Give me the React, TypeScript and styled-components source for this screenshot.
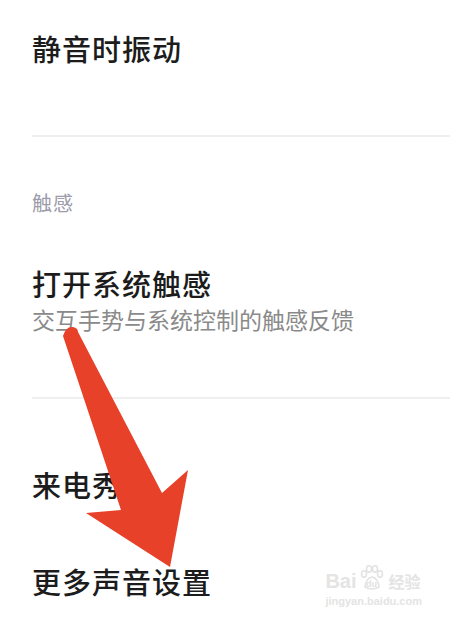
import styled, { createGlobalStyle } from "styled-components";

const GlobalStyle = createGlobalStyle`
  html, body {
    margin: 0;
    padding: 0;
    background: #ffffff;
  }
  body {
    font-family: "Noto Sans CJK SC", "Noto Sans", sans-serif;
  }
`;

const Screen = styled.div`
  position: relative;
  width: 450px;
  height: 620px;
  overflow: hidden;
  background: #ffffff;
`;

const List = styled.div`
  display: flex;
  flex-direction: column;
  padding-left: 32px;
`;

const Item = styled.div<{ $top: number; $bottom: number }>`
  display: flex;
  flex-direction: column;
  gap: 4px;
  padding: ${({ $top, $bottom }) => `${$top}px 0 ${$bottom}px`};
`;

const Title = styled.div`
  color: #1c1c1c;
  font-size: 29px;
  font-weight: 500;
  line-height: 36px;
  letter-spacing: 1px;
`;

const Subtitle = styled.div`
  color: #8a8a8a;
  font-size: 23px;
  line-height: 28px;
`;

const SectionLabel = styled.div`
  padding-top: 54px;
  color: #9c9cab;
  font-size: 20px;
  line-height: 24px;
  letter-spacing: 1px;
`;

const Divider = styled.div`
  height: 2px;
  background: #efefef;
`;

const Arrow = styled.svg`
  position: absolute;
  left: 0;
  top: 0;
  pointer-events: none;
`;

const Watermark = styled.div`
  position: absolute;
  right: 28px;
  bottom: 12px;
  display: flex;
  flex-direction: column;
  align-items: flex-start;
  color: #e4e4e4;
  font-family: "Liberation Sans", Arial, sans-serif;
`;

const MarkRow = styled.div`
  display: flex;
  align-items: flex-end;
  font-size: 20px;
  font-weight: 700;
  line-height: 20px;
`;

const Paw = styled.span`
  display: inline-flex;
  margin: 0 1px;
`;

const MarkCjk = styled.span`
  font-family: "Noto Sans CJK SC", sans-serif;
  font-size: 16px;
  font-weight: 700;
  margin-left: 2px;
`;

const MarkUrl = styled.div`
  font-size: 11px;
  font-weight: 700;
  line-height: 14px;
  margin-top: 3px;
`;

export default function App() {
  return (
    <Screen>
      <GlobalStyle />
      <List>
        <Item $top={30} $bottom={69}>
          <Title>静音时振动</Title>
        </Item>
        <Divider />
        <SectionLabel>触感</SectionLabel>
        <Item $top={50} $bottom={64}>
          <Title>打开系统触感</Title>
          <Subtitle>交互手势与系统控制的触感反馈</Subtitle>
        </Item>
        <Divider />
        <Item $top={67} $bottom={61}>
          <Title>来电秀</Title>
        </Item>
        <Item $top={0} $bottom={0}>
          <Title>更多声音设置</Title>
        </Item>
      </List>

      <Arrow width="450" height="620" viewBox="0 0 450 620">
        <path
          d="M63 336 Q66 326 73 327 Q78 328 78 332 L162 493 L188 470 L170 567 L86 513 L121 510 Z"
          fill="#e8412a"
        />
      </Arrow>

      <Watermark>
        <MarkRow>
          Bai
          <Paw>
            <svg width="28" height="26" viewBox="0 0 28 26">
              <g fill="none" stroke="#e2e2e2" strokeWidth="1.5">
                <ellipse cx="6" cy="9" rx="2.5" ry="3.2" />
                <ellipse cx="11" cy="4" rx="2.5" ry="3.2" />
                <ellipse cx="17" cy="4" rx="2.5" ry="3.2" />
                <ellipse cx="22" cy="9" rx="2.5" ry="3.2" />
                <path d="M7 22 Q8 13 14 12 Q20 13 21 22 Q14 26 7 22 Z" />
              </g>
              <text x="8" y="22" fontSize="9" fontWeight="700" fill="#e2e2e2">
                du
              </text>
            </svg>
          </Paw>
          <MarkCjk>经验</MarkCjk>
        </MarkRow>
        <MarkUrl>jingyan.baidu.com</MarkUrl>
      </Watermark>
    </Screen>
  );
}
